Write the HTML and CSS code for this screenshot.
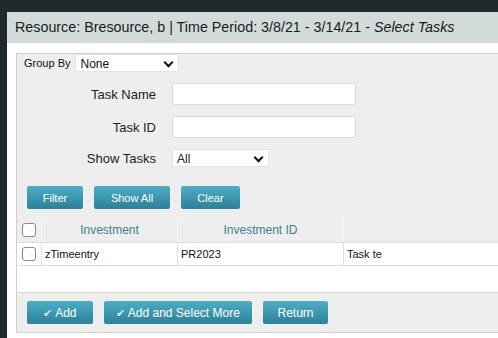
FILE: index.html
```html
<!DOCTYPE html>
<html>
<head>
  <title>Select Tasks</title>
  <link rel="stylesheet" href="styles.css">
</head>
<body>
  <div class="page">
    <div class="titlebar">Resource: Bresource, b | Time Period: 3/8/21 - 3/14/21 - <i>Select Tasks</i></div>
    <div class="content">
      <div class="panel">
        <div class="groupby">
          <span>Group By</span>
          <div class="select wide">None <span class="caret"></span></div>
        </div>
        <div class="filters">
          <label>Task Name</label>
          <div class="field"></div>
          <label>Task ID</label>
          <div class="field"></div>
          <label>Show Tasks</label>
          <div class="select narrow">All <span class="caret"></span></div>
        </div>
        <div class="btns">
          <button class="btn filter">Filter</button>
          <button class="btn showall">Show All</button>
          <button class="btn clear">Clear</button>
        </div>
        <div class="grid">
          <div class="row head">
            <div class="cell chk"><span class="box"></span></div>
            <div class="cell inv">Investment</div>
            <div class="cell invid">Investment ID</div>
            <div class="cell task"></div>
          </div>
          <div class="row">
            <div class="cell chk"><span class="box"></span></div>
            <div class="cell inv">zTimeentry</div>
            <div class="cell invid">PR2023</div>
            <div class="cell task">Task te</div>
          </div>
          <div class="spacer"></div>
        </div>
        <div class="footer">
          <button class="btn add"><span class="tick">&#10004;</span> Add</button>
          <button class="btn more"><span class="tick">&#10004;</span> Add and Select More</button>
          <button class="btn ret">Return</button>
        </div>
      </div>
    </div>
  </div>
</body>
</html>
```

FILE: styles.css
```css
html, body {
  margin: 0;
  height: 100%;
}
body {
  font-family: "Liberation Sans", Arial, sans-serif;
  background-color: #1f2a2d;
  overflow: hidden;
  color: #111;
}
.page {
  margin: 12px 0 0 7px;
  background-color: #fff;
  height: 326px;
}
.titlebar {
  height: 31px;
  line-height: 30px;
  padding-left: 8px;
  background-color: #d3dada;
  font-size: 14.3px;
  color: #1a1a1a;
}
.content {
  padding: 10px 0 0 9px;
}
.panel {
  border: 1px solid #cfcfcf;
  border-right: none;
  background-color: #eeeeee;
}
.groupby {
  display: flex;
  align-items: center;
  gap: 5px;
  padding-left: 7px;
  font-size: 11px;
}
.select {
  position: relative;
  height: 18px;
  line-height: 18px;
  background-color: #fff;
  border: 1px solid #e4e4e4;
  box-sizing: border-box;
  padding-left: 4px;
  font-size: 12px;
}
.select.wide {
  width: 104px;
}
.select.narrow {
  width: 97px;
}
.caret {
  position: absolute;
  right: 6px;
  top: 4px;
  width: 5px;
  height: 5px;
  border-right: 2px solid #111;
  border-bottom: 2px solid #111;
  transform: rotate(45deg);
}
.filters {
  display: grid;
  grid-template-columns: 139px 184px;
  column-gap: 16px;
  row-gap: 11px;
  align-items: center;
  margin-top: 11px;
  font-size: 13px;
  color: #222;
}
.filters label {
  text-align: right;
}
.field {
  height: 22px;
  background-color: #fff;
  border: 1px solid #dcdcdc;
  box-sizing: border-box;
}
.btns {
  display: flex;
  gap: 11px;
  padding: 19px 0 0 10px;
}
.btn {
  height: 23px;
  border: none;
  border-radius: 2px;
  background: linear-gradient(#4eaec7, #2c8098);
  color: #fff;
  font-family: inherit;
  font-size: 11px;
  padding: 0;
}
.filter { width: 56px; }
.showall { width: 76px; }
.clear { width: 59px; }
.grid {
  margin-top: 8px;
  background-color: #fff;
  font-size: 11px;
}
.row {
  display: flex;
  height: 22px;
  border-bottom: 1px solid #dddddd;
}
.row.head {
  height: 25px;
  background-color: #eeeeee;
  color: #3d8292;
  font-size: 12px;
}
.cell {
  display: flex;
  align-items: center;
  border-left: 1px solid #dedede;
  box-sizing: border-box;
  padding-left: 3px;
}
.head .cell {
  justify-content: center;
  padding-left: 0;
  border-left-color: #f6f6f6;
}
.cell.chk {
  width: 24px;
  border-left: none;
  padding-left: 5px;
  justify-content: flex-start;
}
.head .cell.chk {
  padding-left: 5px;
}
.cell.inv { width: 136px; }
.cell.invid { width: 166px; }
.cell.task { flex: 1; }
.box {
  width: 12px;
  height: 12px;
  border: 1px solid #8a8a8a;
  border-radius: 3px;
  background-color: #fff;
}
.spacer {
  height: 26px;
  border-bottom: 1px solid #d8d8d8;
}
.footer {
  display: flex;
  gap: 11px;
  padding: 8px 0 8px 10px;
}
.footer .btn {
  font-size: 12px;
}
.tick {
  font-size: 11px;
  color: #cfe8ef;
}
.add { width: 66px; }
.more { width: 148px; }
.ret { width: 65px; }
```
